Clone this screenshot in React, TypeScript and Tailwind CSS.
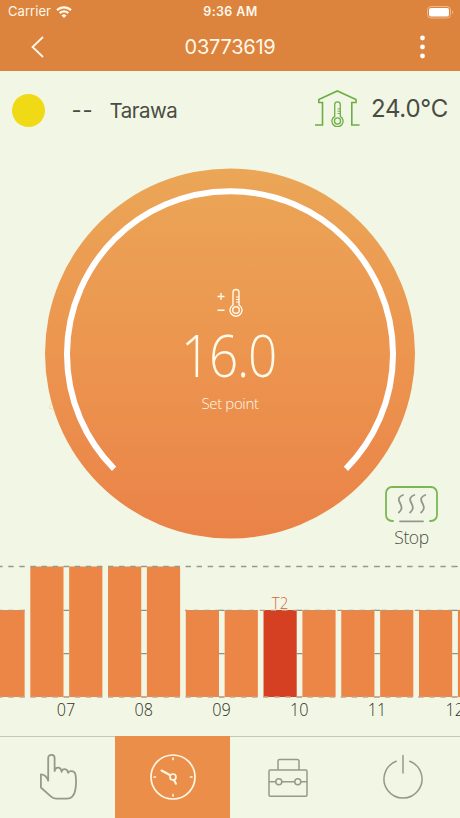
const HOURS = ['07', '08', '09', '10', '11', '12'];

// Height of each half hour slot, the first one is cut off at the left edge
const SLOTS = [87, 130.5, 130.5, 130.5, 130.5, 87, 87, 87, 87, 87, 87, 87, 87];
const ACTIVE_SLOT = 7;
const PITCH = 38.87;

function Thermometer({ className }: { className: string }) {
  return (
    <svg viewBox="0 0 14 28" className={className} fill="none" stroke="currentColor" strokeWidth="1.4">
      <path d="M4 16.5V4a3 3 0 0 1 6 0v12.5a6 6 0 1 1-6 0Z" />
      <circle cx="7" cy="21.5" r="3.3" />
      <path d="M7 8.5h3M7 11h3M7 13.5h3" strokeWidth="1" />
    </svg>
  );
}

function Header() {
  return (
    <header className="h-[71px] bg-[#dc833e] text-[#fff8e8]">
      <div className="flex h-6 items-center justify-between pl-2 pr-[6px]">
        <div className="flex w-40 items-center gap-[5px]">
          <span className="text-[13px] tracking-[0.05px]">Carrier</span>
          <svg viewBox="0 0 16 12" className="h-3 w-4" fill="none" stroke="currentColor" strokeWidth="2.2">
            <path d="M1 4.3a10 10 0 0 1 14 0" />
            <path d="M3.7 7.1a6.2 6.2 0 0 1 8.6 0" />
            <path d="M8 11.9 5.5 9.4a3.6 3.6 0 0 1 5 0Z" fill="currentColor" stroke="none" />
          </svg>
        </div>
        <span className="mr-px text-[12.5px] font-semibold tracking-[0.4px]">9:36 AM</span>
        <div className="flex w-40 justify-end">
          <svg viewBox="0 0 27 13" className="h-[13px] w-[27px]">
            <rect x="0.5" y="0.5" width="23" height="11.5" rx="3.5" fill="none" stroke="#efb98c" />
            <rect x="2" y="2" width="20" height="8.5" rx="2" fill="#fff" />
            <path d="M25.2 4.4c1.5.7 1.5 3 0 3.7Z" fill="#efb98c" />
          </svg>
        </div>
      </div>
      <div className="flex h-[46px] items-center justify-between pl-[31px] pr-[35px]">
        <svg viewBox="0 0 13 22" className="h-[22px] w-[13px]" fill="none" stroke="currentColor" strokeWidth="1.8">
          <path d="M12 1 1.5 11 12 21" />
        </svg>
        <h1 className="mr-[4px] text-[20px] leading-none tracking-[-0.25px]">03773619</h1>
        <svg viewBox="0 0 5 24" className="h-6 w-[5px]" fill="#fff">
          <circle cx="2.5" cy="3" r="2.4" />
          <circle cx="2.5" cy="12" r="2.4" />
          <circle cx="2.5" cy="21" r="2.4" />
        </svg>
      </div>
    </header>
  );
}

function Weather() {
  return (
    <div className="flex h-[78px] items-center pl-[11.5px] pr-3 text-[#4a4c42]">
      <div className="h-[33px] w-[33px] rounded-full bg-[#f0da16]" />
      <span className="ml-[27px] w-[38px] pt-px text-[22px] tracking-[1px]">--</span>
      <span className="pt-[3px] text-[20.5px] tracking-[-0.5px]">Tarawa</span>
      <div className="relative ml-auto mt-[-4px] h-9 w-[45px] text-[#6cae45]">
        <svg viewBox="0 0 45 36" className="h-9 w-[45px]" fill="none" stroke="currentColor" strokeWidth="1.6">
          <path d="M0 35h7.5V12.5H3.8V9.4L22.3 1 41 9.4v3.1h-4.2V35h7.7" />
        </svg>
        <Thermometer className="absolute left-[16px] top-[11px] h-[26px] w-[13px]" />
      </div>
      <span className="ml-[11px] mt-[-3px] text-[24px] tracking-[-0.25px]">24.0°C</span>
    </div>
  );
}

function Dial() {
  return (
    <div className="relative flex h-[409px] justify-center pt-[19px]">
      <svg viewBox="0 0 24 24" className="absolute left-[48px] top-[247px] h-6 w-6" fill="none" stroke="#f6dfb5">
        <path d="M4 5 1 12l9 3-4 2" />
      </svg>
      <div className="relative h-[371px] w-[370px]">
        <svg viewBox="0 0 370 371" className="absolute inset-0">
          <defs>
            <linearGradient id="dial" x1="0" y1="0" x2="0" y2="1">
              <stop offset="0" stopColor="#eba657" />
              <stop offset="0.5" stopColor="#ec954f" />
              <stop offset="1" stopColor="#ea8248" />
            </linearGradient>
          </defs>
          <circle cx="185" cy="185.5" r="185" fill="url(#dial)" />
          <path d="M69.1 300.8a163 163 0 1 1 231.8 0" fill="none" stroke="#fff" strokeWidth="6" />
        </svg>
        <div className="relative flex flex-col items-center pt-[120px] text-[#fffae9]">
          <div className="flex items-center gap-[4px]">
            <svg viewBox="0 0 8 20" className="h-5 w-2" stroke="currentColor" strokeWidth="1.4">
              <path d="M0.5 3.5h7M4 0v7M0.5 17.3h7" />
            </svg>
            <Thermometer className="h-[29px] w-[14px]" />
          </div>
          <span className="mr-[3px] mt-[7px] scale-x-[0.87] font-['Open_Sans'] text-[59px] font-light leading-[60px] tracking-[-1.5px]">
            16.0
          </span>
          <span className="mt-[9px] font-['Open_Sans'] text-[15px] font-light leading-[20px] tracking-[-0.35px]">Set point</span>
        </div>
      </div>
      <div className="absolute right-[22px] top-[336.5px] flex w-[53px] flex-col items-center">
        <svg viewBox="0 0 53 38" className="h-[38px] w-[53px]" fill="none" strokeWidth="1.8" strokeLinecap="round">
          <path d="M8 35H7a6 6 0 0 1-6-6V7a6 6 0 0 1 6-6h39a6 6 0 0 1 6 6v22a6 6 0 0 1-6 6h-1" stroke="#7cb654" />
          <path d="M15 35.3h23" stroke="#92988a" />
          <g stroke="#92988a">
            <path d="M18 9c-4 1.5-5 4-3.5 7s2.8 4.5 1.8 7c-.5 1.5-1.3 2.5-2.5 3.5" />
            <path d="M29.3 9c-4 1.5-5 4-3.5 7s2.8 4.5 1.8 7c-.5 1.5-1.3 2.5-2.5 3.5" />
            <path d="M40.3 9c-4 1.5-5 4-3.5 7s2.8 4.5 1.8 7c-.5 1.5-1.3 2.5-2.5 3.5" />
          </g>
        </svg>
        <span className="mt-[2px] font-['Open_Sans'] text-[17.5px] font-light leading-[22px] tracking-[-0.4px] text-[#4c5045]">Stop</span>
      </div>
    </div>
  );
}

function Schedule() {
  return (
    <svg viewBox="0 0 460 178" className="block h-[178px] w-[460px]">
      {SLOTS.map((height, i) => (
        <rect
          key={i}
          x={30.3 + (i - 1) * PITCH}
          y={139 - height}
          width="33.2"
          height={height}
          fill={i === ACTIVE_SLOT ? '#d54023' : '#eb8647'}
        />
      ))}
      {HOURS.map((hour, i) => {
        const x = 63.5 + i * PITCH * 2;
        return (
          <g key={hour}>
            <path d={`M${x} 8.5h5.6M${x} 52.3h5.6M${x} 95.6h5.6M${x} 139h5.6`} stroke="#8e9282" strokeWidth="1.2" />
            <text
              x={x + 2.5}
              y="157.5"
              textAnchor="middle"
              textLength="18.5"
              lengthAdjust="spacingAndGlyphs"
              className="fill-[#30332a] font-['Open_Sans'] text-[17.5px]"
              fontWeight="300"
            >
              {hour}
            </text>
          </g>
        );
      })}
      <g strokeWidth="1.3" strokeDasharray="5.4 5.68" strokeDashoffset="2.8">
        <path d="M0 8.5h460" stroke="#969a8b" />
        <path d="M0 52.3h27M185 52.3h275" stroke="#b19a80" />
        <path d="M0 139h460" stroke="#c3a58a" />
      </g>
      <text
        x="280"
        y="51"
        textAnchor="middle"
        textLength="16.5"
        lengthAdjust="spacingAndGlyphs"
        className="fill-[#dc6237] font-['Open_Sans'] text-[16px]"
        fontWeight="300"
      >
        T2
      </text>
    </svg>
  );
}

function TabBar() {
  return (
    <nav className="grid h-[82px] grid-cols-4 border-t border-[#c3cbb5] text-[#969b89]">
      <button className="flex justify-center pt-[17px]">
        <svg viewBox="0 0 38 47" className="h-[47px] w-[38px]" fill="none" stroke="currentColor" strokeWidth="1.8" strokeLinejoin="round">
          <path d="M9.2 26.7V4a3.2 3.2 0 0 1 6.4 0v13c.8-4.5 6.2-4.8 7 .8.8-3.7 5.8-3.5 6.5 1 1.5-2.7 6.5-2 7.3 1.4.8 4.5.8 11-.1 15.8-1 5.5-3.5 8.6-8.3 8.6H17c-2.5 0-3.8-.8-5.2-2.2L1.9 33.5V20.3c3.5 0 5.8 2 7.3 6.4Z" />
        </svg>
      </button>
      <button className="-mt-px flex justify-center bg-[#eb8e4a] pt-[17.5px] text-[#fff7e3]">
        <svg viewBox="0 0 46 46" className="h-[46px] w-[46px]" fill="none" stroke="currentColor" strokeWidth="1.7" strokeLinecap="round">
          <circle cx="23" cy="23" r="22" />
          <circle cx="23" cy="23" r="3" />
          <path d="M20.3 21.2 11.5 16.5M24 26l2 3.7" strokeWidth="2.1" />
          <path d="M23 4v1.5M23 40.5V42M4 23h1.5M40.5 23H42" />
        </svg>
      </button>
      <button className="flex justify-center pt-[20.5px]">
        <svg viewBox="0 0 40 40" className="h-10 w-10" fill="none" stroke="currentColor" strokeWidth="1.5">
          <path d="M10 12V3a1.5 1.5 0 0 1 1.5-1.5h18A1.5 1.5 0 0 1 31 3v9" />
          <rect x="1" y="12" width="38" height="26.3" rx="1.2" />
          <path d="M1 23.8h6.8M13.8 23.8h13M32.8 23.8H39" />
          <circle cx="10.8" cy="23.8" r="3" />
          <circle cx="29.8" cy="23.8" r="3" />
        </svg>
      </button>
      <button className="flex justify-center pt-[17px]">
        <svg viewBox="0 0 40 46" className="h-[46px] w-10" fill="none" stroke="currentColor" strokeWidth="1.5" strokeLinecap="round">
          <path d="M13.2 7.3a19 19 0 1 0 13.6 0M20 1.5V19" />
        </svg>
      </button>
    </nav>
  );
}

export default function App() {
  return (
    <main className="flex h-[818px] w-[460px] flex-col overflow-hidden bg-[#f2f7e5] font-['Inter',sans-serif]">
      <Header />
      <Weather />
      <Dial />
      <Schedule />
      <TabBar />
    </main>
  );
}
